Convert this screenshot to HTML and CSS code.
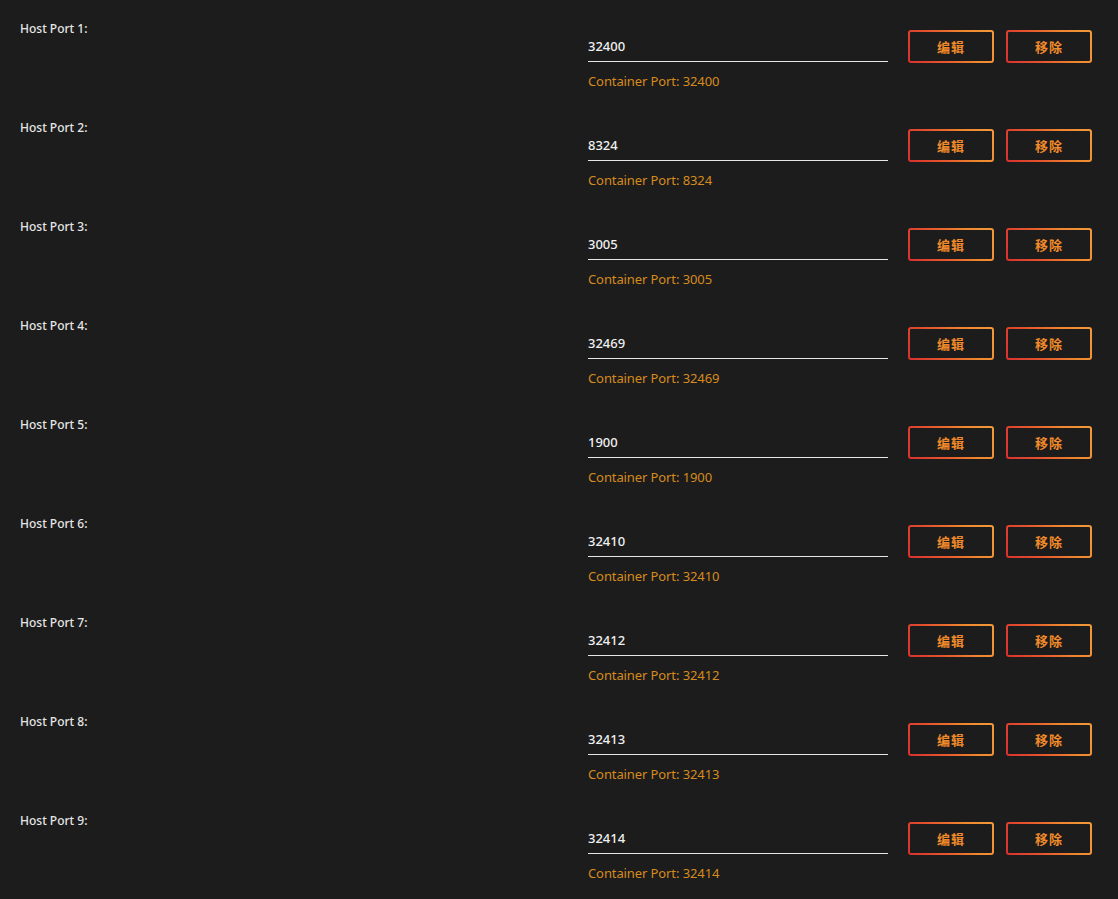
FILE: index.html
```html
<!DOCTYPE html>
<html lang="zh">
<head>
<meta charset="utf-8">
<title>Ports</title>
<link rel="stylesheet" href="styles.css">
</head>
<body>
<div class="list">
  <div class="row"><div class="label">Host Port 1:</div><div class="field"><div class="input">32400</div><div class="hint">Container Port: 32400</div></div><div class="actions"><button class="btn">编辑</button><button class="btn">移除</button></div></div>
  <div class="row"><div class="label">Host Port 2:</div><div class="field"><div class="input">8324</div><div class="hint">Container Port: 8324</div></div><div class="actions"><button class="btn">编辑</button><button class="btn">移除</button></div></div>
  <div class="row"><div class="label">Host Port 3:</div><div class="field"><div class="input">3005</div><div class="hint">Container Port: 3005</div></div><div class="actions"><button class="btn">编辑</button><button class="btn">移除</button></div></div>
  <div class="row"><div class="label">Host Port 4:</div><div class="field"><div class="input">32469</div><div class="hint">Container Port: 32469</div></div><div class="actions"><button class="btn">编辑</button><button class="btn">移除</button></div></div>
  <div class="row"><div class="label">Host Port 5:</div><div class="field"><div class="input">1900</div><div class="hint">Container Port: 1900</div></div><div class="actions"><button class="btn">编辑</button><button class="btn">移除</button></div></div>
  <div class="row"><div class="label">Host Port 6:</div><div class="field"><div class="input">32410</div><div class="hint">Container Port: 32410</div></div><div class="actions"><button class="btn">编辑</button><button class="btn">移除</button></div></div>
  <div class="row"><div class="label">Host Port 7:</div><div class="field"><div class="input">32412</div><div class="hint">Container Port: 32412</div></div><div class="actions"><button class="btn">编辑</button><button class="btn">移除</button></div></div>
  <div class="row"><div class="label">Host Port 8:</div><div class="field"><div class="input">32413</div><div class="hint">Container Port: 32413</div></div><div class="actions"><button class="btn">编辑</button><button class="btn">移除</button></div></div>
  <div class="row"><div class="label">Host Port 9:</div><div class="field"><div class="input">32414</div><div class="hint">Container Port: 32414</div></div><div class="actions"><button class="btn">编辑</button><button class="btn">移除</button></div></div>
</div>
</body>
</html>
```
FILE: styles.css
```css
html, body {
  margin: 0;
  padding: 0;
  background: #1c1c1c;
}
body {
  font-family: "Noto Sans", "Noto Sans CJK SC", sans-serif;
  color: #e8e8e8;
  overflow: hidden;
}
.list {
  padding-top: 13px;
}
.row {
  display: flex;
  height: 99px;
  padding: 0 26px 0 20px;
}
.label {
  flex: 1;
  font-size: 12px;
  font-weight: 500;
  line-height: 32px;
  color: #e6e6e6;
}
.field {
  width: 300px;
  margin-top: 17px;
}
.input {
  height: 31px;
  line-height: 32px;
  border-bottom: 1px solid #e6e6e6;
  font-size: 13px;
  font-weight: 500;
  color: #f0f0f0;
}
.hint {
  margin-top: 10px;
  font-size: 13px;
  line-height: 18px;
  letter-spacing: -0.1px;
  color: #d68b1c;
}
.actions {
  display: flex;
  gap: 12px;
  margin-left: 20px;
  margin-top: 17px;
  height: 33px;
}
.btn {
  width: 86px;
  height: 33px;
  padding: 0;
  border: 2px solid transparent;
  border-radius: 3px;
  background:
    linear-gradient(#1c1c1c, #1c1c1c) padding-box,
    linear-gradient(65deg, #d9302f 0%, #e5552e 35%, #f0872f 70%, #f29a3b 100%) border-box;
  color: #f08a2a;
  font-family: "Noto Sans CJK SC", sans-serif;
  font-size: 13px;
  font-weight: 700;
  letter-spacing: 1px;
  cursor: pointer;
}
```
